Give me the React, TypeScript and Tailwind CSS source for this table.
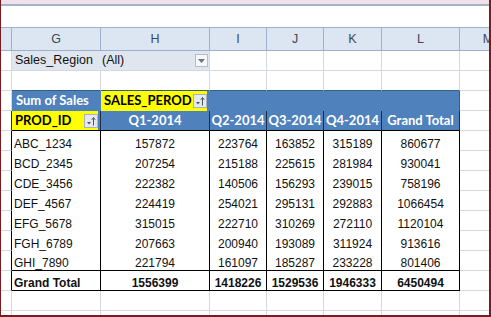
import React from 'react';

const rows: [string, number, number, number, number, number][] = [
  ['ABC_1234', 157872, 223764, 163852, 315189, 860677],
  ['BCD_2345', 207254, 215188, 225615, 281984, 930041],
  ['CDE_3456', 222382, 140506, 156293, 239015, 758196],
  ['DEF_4567', 224419, 254021, 295131, 292883, 1066454],
  ['EFG_5678', 315015, 222710, 310269, 272110, 1120104],
  ['FGH_6789', 207663, 200940, 193089, 311924, 913616],
  ['GHI_7890', 221794, 161097, 185287, 233228, 801406],
];

const totals = [1556399, 1418226, 1529536, 1946333, 6450494];

// column widths F(partial) .. M(partial)
const W = ['w-[11px]', 'w-[89px]', 'w-[109px]', 'w-[57px]', 'w-[57px]', 'w-[58px]', 'w-[78px]', 'w-[29px]'];

const grid = 'shrink-0 h-full border-r border-b border-[#d4d9e0]';
const calibri = "font-['Lato',sans-serif] font-bold text-[13px] whitespace-nowrap";

const FilterButton = () => (
  <div className="shrink-0 w-[14px] h-[14px] bg-[#e4e9f0] border border-[#a9b3c1] flex items-center justify-center">
    <svg width="12" height="12" viewBox="0 0 12 12">
      <path d="M2 7 L6 7 L4 9.5 Z" fill="#4b5563" />
      <path d="M8.5 10.5 V3" stroke="#4b5563" strokeWidth="1" />
      <path d="M6.8 4.8 L8.5 2.5 L10.2 4.8" stroke="#4b5563" strokeWidth="1" fill="none" />
    </svg>
  </div>
);

const EmptyRow = ({ bottom }: { bottom?: string }) => (
  <div className="flex h-[20px]">
    <div className={`${W[0]} ${grid}`} />
    <div className={`${W[1]} shrink-0 h-full border-r border-r-[#d4d9e0] border-b ${bottom ?? 'border-b-[#d4d9e0]'}`} />
    <div className={`${W[2]} shrink-0 h-full border-r border-r-[#d4d9e0] border-b ${bottom ?? 'border-b-[#d4d9e0]'}`} />
    <div className={`${W[3]} shrink-0 h-full border-r border-r-[#d4d9e0] border-b ${bottom ?? 'border-b-[#d4d9e0]'}`} />
    <div className={`${W[4]} shrink-0 h-full border-r border-r-[#d4d9e0] border-b ${bottom ?? 'border-b-[#d4d9e0]'}`} />
    <div className={`${W[5]} shrink-0 h-full border-r border-r-[#d4d9e0] border-b ${bottom ?? 'border-b-[#d4d9e0]'}`} />
    <div className={`${W[6]} shrink-0 h-full border-r border-r-[#d4d9e0] border-b ${bottom ?? 'border-b-[#d4d9e0]'}`} />
    <div className={`${W[7]} shrink-0 h-full border-b border-[#d4d9e0]`} />
  </div>
);

const DataRow = ({ label, values, last, bold }: { label: string; values: number[]; last?: boolean; bold?: boolean }) => {
  const b = last ? 'border-b border-b-black' : '';
  const weight = bold ? 'font-bold' : '';
  return (
    <div className={`flex h-[20px] ${weight}`}>
      <div className={`${W[0]} shrink-0 h-full border-b border-b-[#d4d9e0] border-r border-r-black`} />
      <div className={`${W[1]} shrink-0 h-full border-r border-r-black ${b} flex items-end pl-[2px] leading-[14px]`}>{label}</div>
      <div className={`${W[2]} shrink-0 h-full border-r border-r-black ${b} flex items-end justify-center leading-[14px]`}>{values[0]}</div>
      <div className={`${W[3]} shrink-0 h-full border-r border-r-black ${b} flex items-end justify-center leading-[14px]`}>{values[1]}</div>
      <div className={`${W[4]} shrink-0 h-full border-r border-r-black ${b} flex items-end justify-center leading-[14px]`}>{values[2]}</div>
      <div className={`${W[5]} shrink-0 h-full border-r border-r-black ${b} flex items-end justify-center leading-[14px]`}>{values[3]}</div>
      <div className={`${W[6]} shrink-0 h-full border-r border-r-black ${b} flex items-end justify-center leading-[14px]`}>{values[4]}</div>
      <div className={`${W[7]} shrink-0 h-full border-b border-[#d4d9e0]`} />
    </div>
  );
};

export default function App() {
  return (
    <div className="w-[491px] h-[317px] overflow-hidden bg-white border-l border-r-2 border-b-2 border-[#7c1b1f] font-['Liberation_Sans',Arial,sans-serif] text-[12px] text-[#111]">
      {/* window top */}
      <div className="h-[4px] bg-[#efe2e8]" />
      <div className="h-[2px] bg-[#a2b3ca]" />
      <div className="h-[22px] border-b border-[#9fb2c9]" />

      {/* column letters */}
      <div className="flex h-[23px] bg-[#dce6f2] text-[#3d4856] text-[12.5px]">
        <div className={`${W[0]} shrink-0 h-full border-r border-b border-[#9db1cc]`} />
        {['G', 'H', 'I', 'J', 'K', 'L'].map((c, i) => (
          <div key={c} className={`${W[i + 1]} shrink-0 h-full border-r border-b border-[#9db1cc] flex items-center justify-center`}>
            {c}
          </div>
        ))}
        <div className={`${W[7]} shrink-0 h-full border-b border-[#9db1cc] overflow-hidden`}>
          <div className="w-[56px] h-full flex items-center justify-center">M</div>
        </div>
      </div>

      {/* page field */}
      <div className="flex h-[20px] text-[12.5px]">
        <div className={`${W[0]} ${grid}`} />
        <div className={`${W[1]} shrink-0 h-full bg-[#dfe6ef] border-b border-[#d4d9e0] flex items-center pl-[3px] whitespace-nowrap`}>
          Sales_Region
        </div>
        <div className={`${W[2]} shrink-0 h-full bg-[#dfe6ef] border-r border-b border-[#d4d9e0] flex items-center pl-[1px] pr-[1px]`}>
          <span className="flex-1">(All)</span>
          <div className="w-[13px] h-[13px] bg-[#f5f7fa] border border-[#b3bcc8] flex items-center justify-center">
            <svg width="7" height="4" viewBox="0 0 7 4">
              <path d="M0 0 H7 L3.5 4 Z" fill="#6b7280" />
            </svg>
          </div>
        </div>
        <div className={`${W[3]} ${grid}`} />
        <div className={`${W[4]} ${grid}`} />
        <div className={`${W[5]} ${grid}`} />
        <div className={`${W[6]} ${grid}`} />
        <div className={`${W[7]} shrink-0 h-full border-b border-[#d4d9e0]`} />
      </div>

      <EmptyRow bottom="border-b-[#385d8a]" />

      {/* Sum of Sales / SALES_PEROD */}
      <div className={`flex h-[20px] ${calibri}`}>
        <div className={`${W[0]} ${grid}`} />
        <div className={`${W[1]} shrink-0 h-full bg-[#4f81bd] text-white flex items-center pl-[4px]`}>Sum of Sales</div>
        <div className={`${W[2]} shrink-0 h-full bg-[#4f81bd] flex items-stretch pr-[3px]`}>
          <div className="flex-1 bg-[#ffff00] text-black flex items-center pl-[3px]">SALES_PEROD</div>
          <div className="bg-[#ffff00] flex items-center">
            <FilterButton />
          </div>
        </div>
        <div className="w-[250px] shrink-0 h-full bg-[#4f81bd] border-r border-[#385d8a]" />
        <div className={`${W[7]} shrink-0 h-full border-b border-[#d4d9e0]`} />
      </div>

      {/* PROD_ID / quarters */}
      <div className={`flex h-[20px] ${calibri}`}>
        <div className={`${W[0]} shrink-0 h-full border-b border-b-[#d4d9e0] border-r border-r-[#1f2d44]`} />
        <div className={`${W[1]} shrink-0 h-full bg-[#4f81bd] border-r border-r-[#1f2d44] border-b border-b-black flex items-stretch pr-[2px]`}>
          <div className="flex-1 bg-[#ffff00] text-black flex items-center pl-[3px]">PROD_ID</div>
          <div className="bg-[#ffff00] flex items-center">
            <FilterButton />
          </div>
        </div>
        {['Q1-2014', 'Q2-2014', 'Q3-2014', 'Q4-2014', 'Grand Total'].map((q, i) => (
          <div
            key={q}
            className={`${W[i + 2]} shrink-0 h-full bg-[#4f81bd] text-white border-r border-r-[#1f2d44] border-b border-b-black flex items-center justify-center`}
          >
            {q}
          </div>
        ))}
        <div className={`${W[7]} shrink-0 h-full border-b border-[#d4d9e0]`} />
      </div>

      {rows.map((r, i) => (
        <DataRow key={r[0]} label={r[0]} values={r.slice(1) as number[]} last={i === rows.length - 1} />
      ))}
      <DataRow label="Grand Total" values={totals} last bold />

      <EmptyRow />

      {/* partial row at the bottom */}
      <div className="flex h-[4px]">
        <div className={`${W[0]} shrink-0 h-full border-r border-[#d4d9e0]`} />
        <div className={`${W[1]} shrink-0 h-full border-r border-[#d4d9e0]`} />
        <div className={`${W[2]} shrink-0 h-full border-r border-[#d4d9e0]`} />
        <div className={`${W[3]} shrink-0 h-full border-r border-[#d4d9e0]`} />
        <div className={`${W[4]} shrink-0 h-full border-r border-[#d4d9e0]`} />
        <div className={`${W[5]} shrink-0 h-full border-r border-[#d4d9e0]`} />
        <div className={`${W[6]} shrink-0 h-full border-r border-[#d4d9e0]`} />
        <div className={`${W[7]} shrink-0 h-full`} />
      </div>
    </div>
  );
}
